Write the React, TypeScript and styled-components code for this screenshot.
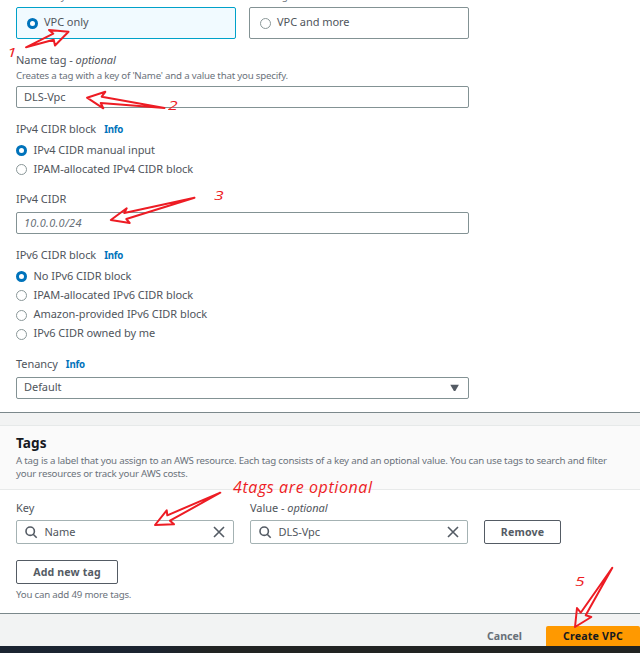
import React from 'react';
import styled, { createGlobalStyle, css } from 'styled-components';

const GlobalStyle = createGlobalStyle`
  * { box-sizing: border-box; }
  body { margin: 0; background: #f2f3f3; overflow: hidden; }
`;

const Page = styled.div`
  position: relative;
  width: 640px;
  height: 653px;
  overflow: hidden;
  display: flex;
  flex-direction: column;
  background: #f2f3f3;
  color: #50555c;
  font: 11px/16px 'Noto Sans', 'Open Sans', sans-serif;
  letter-spacing: -0.05px;
  white-space: nowrap;
`;

const Panel = styled.section<{ $height: number; $topLine?: boolean }>`
  height: ${p => p.$height}px;
  flex: none;
  display: flex;
  flex-direction: column;
  background: #fff;
  border-bottom: 1px solid #7b888b;
  border-top: ${p => (p.$topLine ? '1px solid #e6e9e9' : '0')};
`;

const SettingsBody = styled.div`
  width: 469px;
  padding-left: 16px;
  display: flex;
  flex-direction: column;
`;

const Note = styled.div`
  font-size: 9.7px;
  line-height: 13px;
  letter-spacing: -0.2px;
  color: #6b727b;
`;

const ScrolledNote = styled(Note)`
  height: 7px;
  overflow: hidden;
  display: flex;
  align-items: flex-end;
  padding-bottom: 4px;
`;

const HintNote = styled(Note)`
  padding-top: 1px;
  height: 13px;
`;

const CardRow = styled.div`
  display: grid;
  grid-template-columns: 1fr 1fr;
  gap: 13px;
`;

const Card = styled.label<{ $selected?: boolean }>`
  height: 32px;
  display: flex;
  align-items: center;
  gap: 6px;
  padding: 0 10px;
  border: 1px solid ${p => (p.$selected ? '#00a1c9' : '#839294')};
  border-radius: 2px;
  background: ${p => (p.$selected ? '#f1faff' : '#fff')};
`;

const CardText = styled.span`
  margin-top: -2px;
`;

const Radio = styled.span<{ $on?: boolean }>`
  width: 11px;
  height: 11px;
  flex: none;
  border-radius: 50%;
  background: #fff;
  border: ${p => (p.$on ? '3.6px solid #0073bb' : '1px solid #8a9798')};
`;

const Label = styled.div<{ $gap: number }>`
  margin-top: ${p => p.$gap}px;
  height: 16px;
  display: flex;
  align-items: baseline;
  white-space: pre;
`;

const Italic = styled.em`
  font-style: italic;
`;

const Info = styled.a`
  margin-left: 8px;
  font-size: 9.7px;
  font-weight: 700;
  letter-spacing: -0.25px;
  color: #0073bb;
`;

const RadioList = styled.div<{ $pitch: number }>`
  margin-top: 4px;
  display: grid;
  grid-auto-rows: ${p => p.$pitch}px;
`;

const RadioRow = styled.label`
  display: flex;
  align-items: center;
  gap: 6.5px;
`;

const RadioText = styled.span`
  line-height: 15px;
  margin-top: -3px;
`;

const Field = styled.div<{ $gap: number }>`
  margin-top: ${p => p.$gap}px;
  height: 22px;
  display: flex;
  align-items: center;
  justify-content: space-between;
  padding: 0 9px 1px 7px;
  border: 1px solid #839294;
  border-radius: 2px;
  background: #fff;
`;

const SelectField = styled(Field)`
  padding-bottom: 2px;
`;

const Placeholder = styled.em`
  letter-spacing: 0.27px;
  color: #687078;
`;

const TagsHeader = styled.header`
  height: 64px;
  flex: none;
  padding: 7px 16px 0;
  background: #fafafa;
  border-bottom: 1px solid #e8eaea;
`;

const Title = styled.h2`
  margin: 0 0 2px;
  font-size: 13.6px;
  line-height: 19px;
  font-weight: 700;
  letter-spacing: 0.05px;
  color: #16191f;
`;

const TagGrid = styled.div`
  display: grid;
  grid-template-columns: 218px 218px 77px;
  column-gap: 16px;
  align-items: end;
  padding-left: 16px;
`;

const SearchField = styled.div`
  margin-top: 4px;
  height: 24px;
  display: flex;
  align-items: center;
  padding: 0 8px;
  border: 1px solid #a4b2b3;
  border-radius: 2px;
`;

const SearchText = styled.span`
  flex: 1;
  margin-left: 6.5px;
`;

const buttonText = css`
  font-size: 10.6px;
  font-weight: 700;
  letter-spacing: 0.15px;
`;

const OutlineButton = styled.div<{ $width: number }>`
  ${buttonText}
  width: ${p => p.$width}px;
  height: 24px;
  display: flex;
  align-items: center;
  justify-content: center;
  border: 1px solid #545b64;
  border-radius: 2px;
  color: #545b64;
`;

const AddArea = styled.div`
  margin-top: 16px;
  padding-left: 16px;
  display: flex;
  flex-direction: column;
  gap: 4px;
`;

const Footer = styled.footer`
  ${buttonText}
  height: 32px;
  flex: none;
  display: flex;
  justify-content: flex-end;
  align-items: flex-end;
  gap: 24px;
`;

const Cancel = styled.span`
  height: 20px;
  line-height: 20px;
  letter-spacing: 0;
  color: #687078;
`;

const Primary = styled.span`
  width: 94px;
  height: 20px;
  line-height: 20px;
  text-align: center;
  border-radius: 2px 2px 0 0;
  background: #ff9900;
  color: #16191f;
  letter-spacing: 0.2px;
`;

const BottomBar = styled.div`
  height: 7px;
  flex: none;
  background: linear-gradient(90deg, #1b2431 0, #1b2330 150px, #212322 210px);
`;

const Spacer = styled.div`
  height: 12px;
  flex: none;
`;

const Annotations = styled.svg`
  position: absolute;
  inset: 0;
  pointer-events: none;
`;

const Mark = styled.span<{ $x: number; $y: number; $size?: number; $spacing?: number }>`
  position: absolute;
  left: ${p => p.$x}px;
  top: ${p => p.$y}px;
  font: italic 400 ${p => p.$size ?? 13}px/16px 'Open Sans', 'Noto Sans', sans-serif;
  letter-spacing: ${p => p.$spacing ?? 0}px;
  color: #ed1c24;
`;

const WideMark = styled(Mark)`
  transform: scaleX(1.35);
  transform-origin: left;
`;

const SearchIcon = () => (
  <svg width="13" height="13" viewBox="0 0 13 13" fill="none" stroke="#545b64" strokeWidth="1.6">
    <circle cx="5.2" cy="5.2" r="4.2" />
    <path d="M8.2 8.2 11.7 11.7" />
  </svg>
);

const CloseIcon = () => (
  <svg width="12" height="12" viewBox="0 0 12 12" fill="none" stroke="#545b64" strokeWidth="1.6">
    <path d="M1 1 11 11M11 1 1 11" />
  </svg>
);

const CaretIcon = () => (
  <svg width="9" height="7" viewBox="0 0 9 7">
    <path d="M.3 .8H8.9L5.3 7H3.9Z" fill="#545b64" />
  </svg>
);

const RadioOption = ({ text, on }: { text: string; on?: boolean }) => (
  <RadioRow>
    <Radio $on={on} />
    <RadioText>{text}</RadioText>
  </RadioRow>
);

const SearchBox = ({ value }: { value: string }) => (
  <SearchField>
    <SearchIcon />
    <SearchText>{value}</SearchText>
    <CloseIcon />
  </SearchField>
);

export default function App() {
  return (
    <Page>
      <GlobalStyle />
      <Panel $height={413}>
        <SettingsBody>
          <ScrolledNote>Create only the VPC resource or the VPC and other networking resources.</ScrolledNote>
          <CardRow>
            <Card $selected><Radio $on /><CardText>VPC only</CardText></Card>
            <Card><Radio /><CardText>VPC and more</CardText></Card>
          </CardRow>
          <Label $gap={13}>Name tag - <Italic>optional</Italic></Label>
          <HintNote>Creates a tag with a key of 'Name' and a value that you specify.</HintNote>
          <Field $gap={5}>DLS-Vpc</Field>

          <Label $gap={13}>IPv4 CIDR block<Info>Info</Info></Label>
          <RadioList $pitch={19}>
            <RadioOption on text="IPv4 CIDR manual input" />
            <RadioOption text="IPAM-allocated IPv4 CIDR block" />
          </RadioList>

          <Label $gap={12}>IPv4 CIDR</Label>
          <Field $gap={5}><Placeholder>10.0.0.0/24</Placeholder></Field>

          <Label $gap={13}>IPv6 CIDR block<Info>Info</Info></Label>
          <RadioList $pitch={19.25}>
            <RadioOption on text="No IPv6 CIDR block" />
            <RadioOption text="IPAM-allocated IPv6 CIDR block" />
            <RadioOption text="Amazon-provided IPv6 CIDR block" />
            <RadioOption text="IPv6 CIDR owned by me" />
          </RadioList>

          <Label $gap={12}>Tenancy<Info>Info</Info></Label>
          <SelectField $gap={5}>Default<CaretIcon /></SelectField>
        </SettingsBody>
      </Panel>

      <Spacer />

      <Panel $height={189} $topLine>
        <TagsHeader>
          <Title>Tags</Title>
          <Note>
            A tag is a label that you assign to an AWS resource. Each tag consists of a key and an optional value. You can use tags to search and filter
            <br />
            your resources or track your AWS costs.
          </Note>
        </TagsHeader>
        <TagGrid>
          <div>
            <Label $gap={10}>Key</Label>
            <SearchBox value="Name" />
          </div>
          <div>
            <Label $gap={10}>Value - <Italic>optional</Italic></Label>
            <SearchBox value="DLS-Vpc" />
          </div>
          <OutlineButton $width={77}>Remove</OutlineButton>
        </TagGrid>
        <AddArea>
          <OutlineButton $width={102}>Add new tag</OutlineButton>
          <Note>You can add 49 more tags.</Note>
        </AddArea>
      </Panel>

      <Footer>
        <Cancel>Cancel</Cancel>
        <Primary>Create VPC</Primary>
      </Footer>
      <BottomBar />

      <Annotations width="640" height="653" fill="none" stroke="#ed1c24" strokeWidth="2" strokeLinejoin="round">
        <path d="M26 47.3 53.3 33.7 49 30 68.5 31.8 55 45.5 53.7 39.7Z" />
        <path d="M87 97.7 105.3 91.8 101.7 96.7 164.5 108 100.7 103 103.3 108.3Z" />
        <path d="M110.8 220 126.7 208.3 124.3 213 194.5 197.7 126.3 219 129.7 223Z" />
        <path d="M155 525 166.7 510.3 167.3 515.3 220.3 492.7 170 520.7 174 524.3Z" />
        <path d="M575 627 577 608 580.7 612.7 612.3 567.7 585.7 615.3 591.3 617Z" />
      </Annotations>
      <WideMark $x={7} $y={44}>1</WideMark>
      <WideMark $x={168} $y={97}>2</WideMark>
      <WideMark $x={214} $y={187}>3</WideMark>
      <Mark $x={233} $y={479} $size={16} $spacing={0.6}>4tags are optional</Mark>
      <WideMark $x={575} $y={573}>5</WideMark>
    </Page>
  );
}
